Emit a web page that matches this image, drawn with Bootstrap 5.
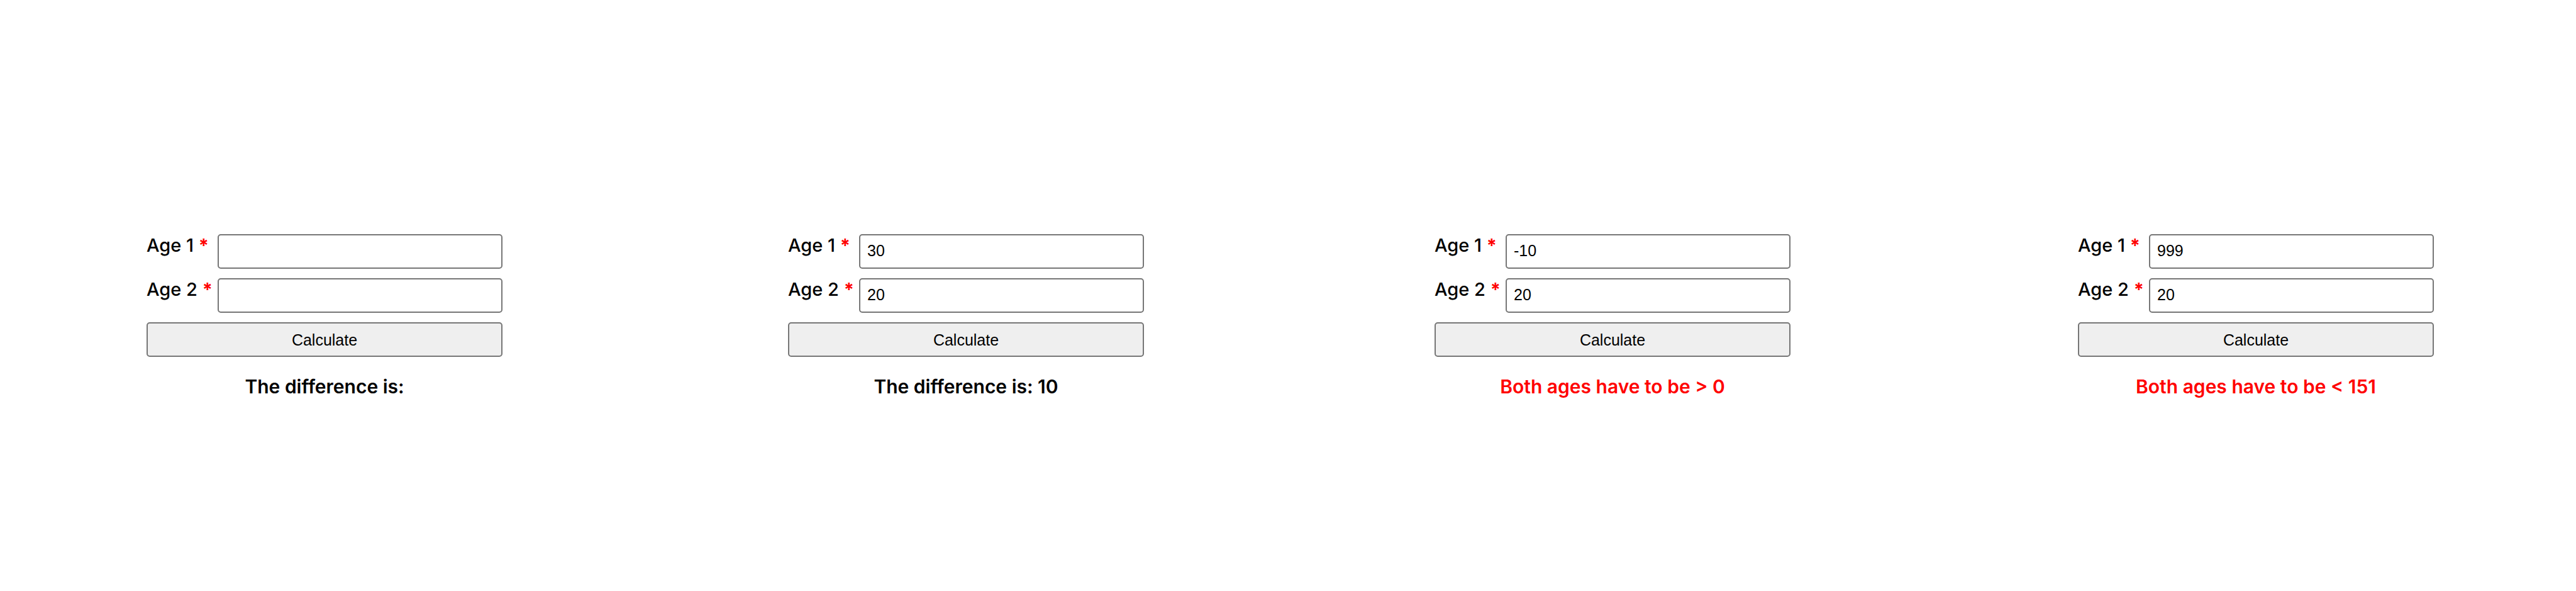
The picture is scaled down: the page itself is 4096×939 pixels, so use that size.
<!DOCTYPE html>
<html lang="en">
<head>
<meta charset="utf-8">
<meta name="viewport" content="width=device-width, initial-scale=1">
<title>Age difference calculator</title>
<link href="https://cdn.jsdelivr.net/npm/bootstrap@5.3.0/dist/css/bootstrap.min.css" rel="stylesheet">
<style>
  body { font-family: Inter, "Liberation Sans", sans-serif; color: #000; background: #fff; }
  .boards { display: grid; grid-template-columns: 1032fr 1008fr 1048fr 998fr; padding-right: 10px; }
  .board { display: grid; grid-template-rows: 1fr auto 1fr; justify-items: center; min-height: 100vh; }
  .calc { grid-row: 2; width: 566px; max-width: 100%; gap: 15px; }
  .age-label { width: 113px; font-size: 29px; line-height: 36px; font-weight: 500; }
  .req { color: #f00; font-weight: 700; }
  .age-input, .calc-btn { height: 55px; border: 2px solid #767676; border-radius: 5px; color: #000;
    font-family: "Liberation Sans", Arial, sans-serif; font-size: 25px; line-height: 30px; }
  .age-input { padding: 0 11px 2px; appearance: textfield; background: #fff; }
  .calc-btn { padding: 0; background: #efefef; }
  .result { grid-row: 3; margin: 29px 0 0; font-size: 30px; line-height: 36px; font-weight: 600; }
  .result.failed { color: #f00; }
  @media (max-width: 2400px) {
    .boards { grid-template-columns: repeat(auto-fit, minmax(min(600px, 100%), 1fr)); padding: 0 10px; }
  }
</style>
</head>
<body>
<main class="boards">
  <section class="board">
    <form class="calc d-flex flex-column" novalidate>
      <div class="d-flex align-items-start">
        <label class="age-label flex-shrink-0 text-nowrap" for="a1">Age 1 <span class="req">*</span></label>
        <input class="age-input form-control" id="a1" type="number">
      </div>
      <div class="d-flex align-items-start">
        <label class="age-label flex-shrink-0 text-nowrap" for="a2">Age 2 <span class="req">*</span></label>
        <input class="age-input form-control" id="a2" type="number">
      </div>
      <button class="calc-btn btn w-100" type="button">Calculate</button>
    </form>
    <h2 class="result">The difference is:</h2>
  </section>
  <section class="board">
    <form class="calc d-flex flex-column" novalidate>
      <div class="d-flex align-items-start">
        <label class="age-label flex-shrink-0 text-nowrap" for="b1">Age 1 <span class="req">*</span></label>
        <input class="age-input form-control" id="b1" type="number" value="30">
      </div>
      <div class="d-flex align-items-start">
        <label class="age-label flex-shrink-0 text-nowrap" for="b2">Age 2 <span class="req">*</span></label>
        <input class="age-input form-control" id="b2" type="number" value="20">
      </div>
      <button class="calc-btn btn w-100" type="button">Calculate</button>
    </form>
    <h2 class="result">The difference is: 10</h2>
  </section>
  <section class="board">
    <form class="calc d-flex flex-column" novalidate>
      <div class="d-flex align-items-start">
        <label class="age-label flex-shrink-0 text-nowrap" for="c1">Age 1 <span class="req">*</span></label>
        <input class="age-input form-control" id="c1" type="number" value="-10">
      </div>
      <div class="d-flex align-items-start">
        <label class="age-label flex-shrink-0 text-nowrap" for="c2">Age 2 <span class="req">*</span></label>
        <input class="age-input form-control" id="c2" type="number" value="20">
      </div>
      <button class="calc-btn btn w-100" type="button">Calculate</button>
    </form>
    <h2 class="result failed">Both ages have to be &gt; 0</h2>
  </section>
  <section class="board">
    <form class="calc d-flex flex-column" novalidate>
      <div class="d-flex align-items-start">
        <label class="age-label flex-shrink-0 text-nowrap" for="d1">Age 1 <span class="req">*</span></label>
        <input class="age-input form-control" id="d1" type="number" value="999">
      </div>
      <div class="d-flex align-items-start">
        <label class="age-label flex-shrink-0 text-nowrap" for="d2">Age 2 <span class="req">*</span></label>
        <input class="age-input form-control" id="d2" type="number" value="20">
      </div>
      <button class="calc-btn btn w-100" type="button">Calculate</button>
    </form>
    <h2 class="result failed">Both ages have to be &lt; 151</h2>
  </section>
</main>
<script src="https://cdn.jsdelivr.net/npm/bootstrap@5.3.0/dist/js/bootstrap.bundle.min.js"></script>
</body>
</html>
